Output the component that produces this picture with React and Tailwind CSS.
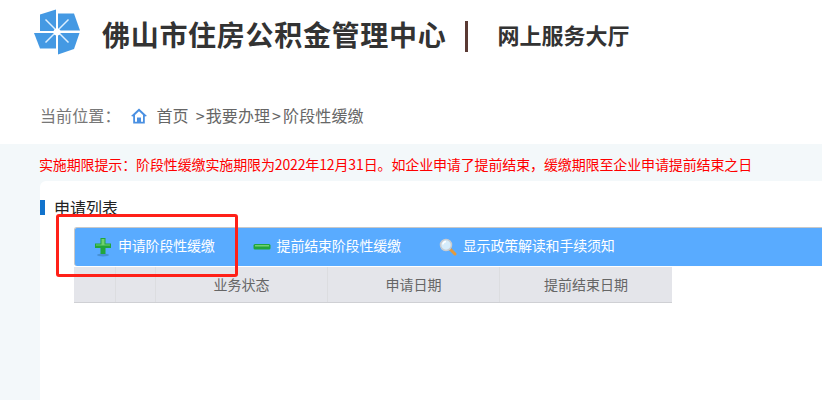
import React from "react";

const font = { fontFamily: '"Noto Sans CJK SC", sans-serif' };

function Logo() {
  return (
    <svg width="46" height="46" viewBox="0 0 46 46" className="shrink-0">
      <path d="M6 5.500 L22 0.500 V22 L6 22 Z" fill="#4499e3" />
      <path d="M24 4.500 H40 L46 21.500 H24 Z" fill="#4499e3" />
      <path d="M0 24 H22 V39.500 H6 Z" fill="#4499e3" />
      <path d="M24 24 H45.500 L40 40 L24 45.500 Z" fill="#4499e3" />
      <path d="M11.500 10.500 L34.500 33.500 M34.500 10.500 L11.500 33.500" stroke="#dcefff" strokeWidth="1.500" />
      <circle cx="23" cy="23" r="3.500" fill="#ffffff" />
    </svg>
  );
}

function HomeIcon() {
  return (
    <svg width="16" height="16" viewBox="0 0 16 16">
      <path d="M8 0.500 L16 8 L13.800 8.500 V15.500 H2.200 V8.500 L0 8 Z" fill="#4a90e2" />
      <path d="M8 3.200 L12 7 V13.800 H10 V9.500 H6 V13.800 H4 V7 Z" fill="#ffffff" />
    </svg>
  );
}

function PlusIcon() {
  return (
    <svg width="18" height="20" viewBox="0 0 18 20">
      <ellipse cx="9" cy="18" rx="6" ry="1.500" fill="#3b7fb5" opacity="0.6" />
      <path d="M6.500 1 H11.500 V6.500 H17 V11 H11.500 V17 H6.500 V11 H1 V6.500 H6.500 Z" fill="#22a63c" />
      <path d="M7.500 2 H10.500 V7.500 H16 V8.500 H2 V7.500 H7.500 Z" fill="#6fd06f" />
    </svg>
  );
}

function MinusIcon() {
  return (
    <svg width="18" height="8" viewBox="0 0 18 8">
      <rect x="0.500" y="1" width="17" height="5.500" rx="1.500" fill="#22a63c" />
      <rect x="2" y="2" width="14" height="1.500" fill="#72cf72" />
    </svg>
  );
}

function GlassIcon() {
  return (
    <svg width="18" height="18" viewBox="0 0 18 18">
      <path d="M11 11 L16 16" stroke="#e39a3c" strokeWidth="3" strokeLinecap="round" />
      <circle cx="7" cy="7" r="5.500" fill="#d6ecfb" stroke="#c9ccd0" strokeWidth="1.500" />
      <path d="M3.800 6.500 A3.500 3.500 0 0 1 7 3.500" fill="none" stroke="#ffffff" strokeWidth="1.500" />
    </svg>
  );
}

function ToolButton({ icon, label, className }) {
  return (
    <div className={`flex items-center gap-[6px] text-[14px] tracking-[-0.2px] text-white ${className}`}>
      <span className="flex w-[18px] justify-center">{icon}</span>
      <span className="-translate-y-[2px]">{label}</span>
    </div>
  );
}

function HeadCell({ className, children }) {
  return (
    <div className={`flex h-full items-center justify-center border-r border-[#dcdde0] text-[14px] text-[#666] ${className}`}>
      {children}
    </div>
  );
}

export default function App() {
  return (
    <div className="relative h-[400px] w-[822px] overflow-hidden bg-white" style={font}>
      {/* Header */}
      <header className="flex h-[64px] items-center pl-[34px]">
        <Logo />
        <h1 className="ml-[22px] translate-y-[2px] text-[28px] leading-none font-bold tracking-[0.7px] text-[#333]">
          佛山市住房公积金管理中心
        </h1>
        <span className="ml-[19px] h-[31px] w-[3px] translate-y-[4px] bg-[#5a3a34]" />
        <span className="ml-[29px] translate-y-[2px] text-[22px] leading-none font-bold text-[#333]">网上服务大厅</span>
      </header>

      {/* Breadcrumb */}
      <div className="flex h-[80px] items-start pl-[40px] pt-[39px] text-[16px] leading-[24px] tracking-[0.1px] text-[#777]">
        <span>当前位置：</span>
        <span className="ml-[10px] mt-[5px]"><HomeIcon /></span>
        <span className="ml-[10px] text-[#666]">首页</span>
        <span className="ml-[7px] text-[#666]">&gt;</span>
        <span className="ml-[1px] text-[#666]">我要办理</span>
        <span className="ml-[2px] text-[#666]">&gt;</span>
        <span className="ml-[2px] text-[#666]">阶段性缓缴</span>
      </div>

      {/* Main */}
      <main className="h-[256px] bg-[#f3f8fa]">
        <p className="h-[37px] pl-[39px] pt-[10px] text-[14px] leading-[20px] tracking-[-0.13px] whitespace-nowrap text-[#f00]">
          实施期限提示：阶段性缓缴实施期限为2022年12月31日。如企业申请了提前结束，缓缴期限至企业申请提前结束之日
        </p>
        <section className="ml-[40px] h-[219px] rounded-tl-[6px] bg-white pt-[18px]">
          <div className="flex h-[16px] items-center">
            <span className="h-[15px] w-[5px] bg-[#1273cc]" />
            <span className="ml-[9px] text-[16px] leading-[16px] text-[#222]">申请列表</span>
          </div>
          <div className="ml-[34px] mt-[12px]">
            <div className="flex h-[39px] items-center rounded-l-[3px] border-t border-l border-[#c8c8c8] bg-[#59abff] pl-[19px]">
              <ToolButton icon={<PlusIcon />} label="申请阶段性缓缴" />
              <ToolButton icon={<MinusIcon />} label="提前结束阶段性缓缴" className="ml-[38px]" />
              <ToolButton icon={<GlassIcon />} label="显示政策解读和手续须知" className="ml-[38px]" />
            </div>
            <div className="mt-[1px] flex h-[36px] w-[598px] border-b border-[#cfd0d4] bg-[#e4e5ea]">
              <HeadCell className="w-[42px]" />
              <HeadCell className="w-[40px]" />
              <HeadCell className="w-[172px]">业务状态</HeadCell>
              <HeadCell className="w-[172px]">申请日期</HeadCell>
              <HeadCell className="w-[172px] border-r-0">提前结束日期</HeadCell>
            </div>
          </div>
        </section>
      </main>

      {/* Red annotation frame */}
      <div className="absolute top-[214px] left-[56px] h-[63px] w-[182px] rounded-[3px] border-[3px] border-[#ff2018]" />
    </div>
  );
}
